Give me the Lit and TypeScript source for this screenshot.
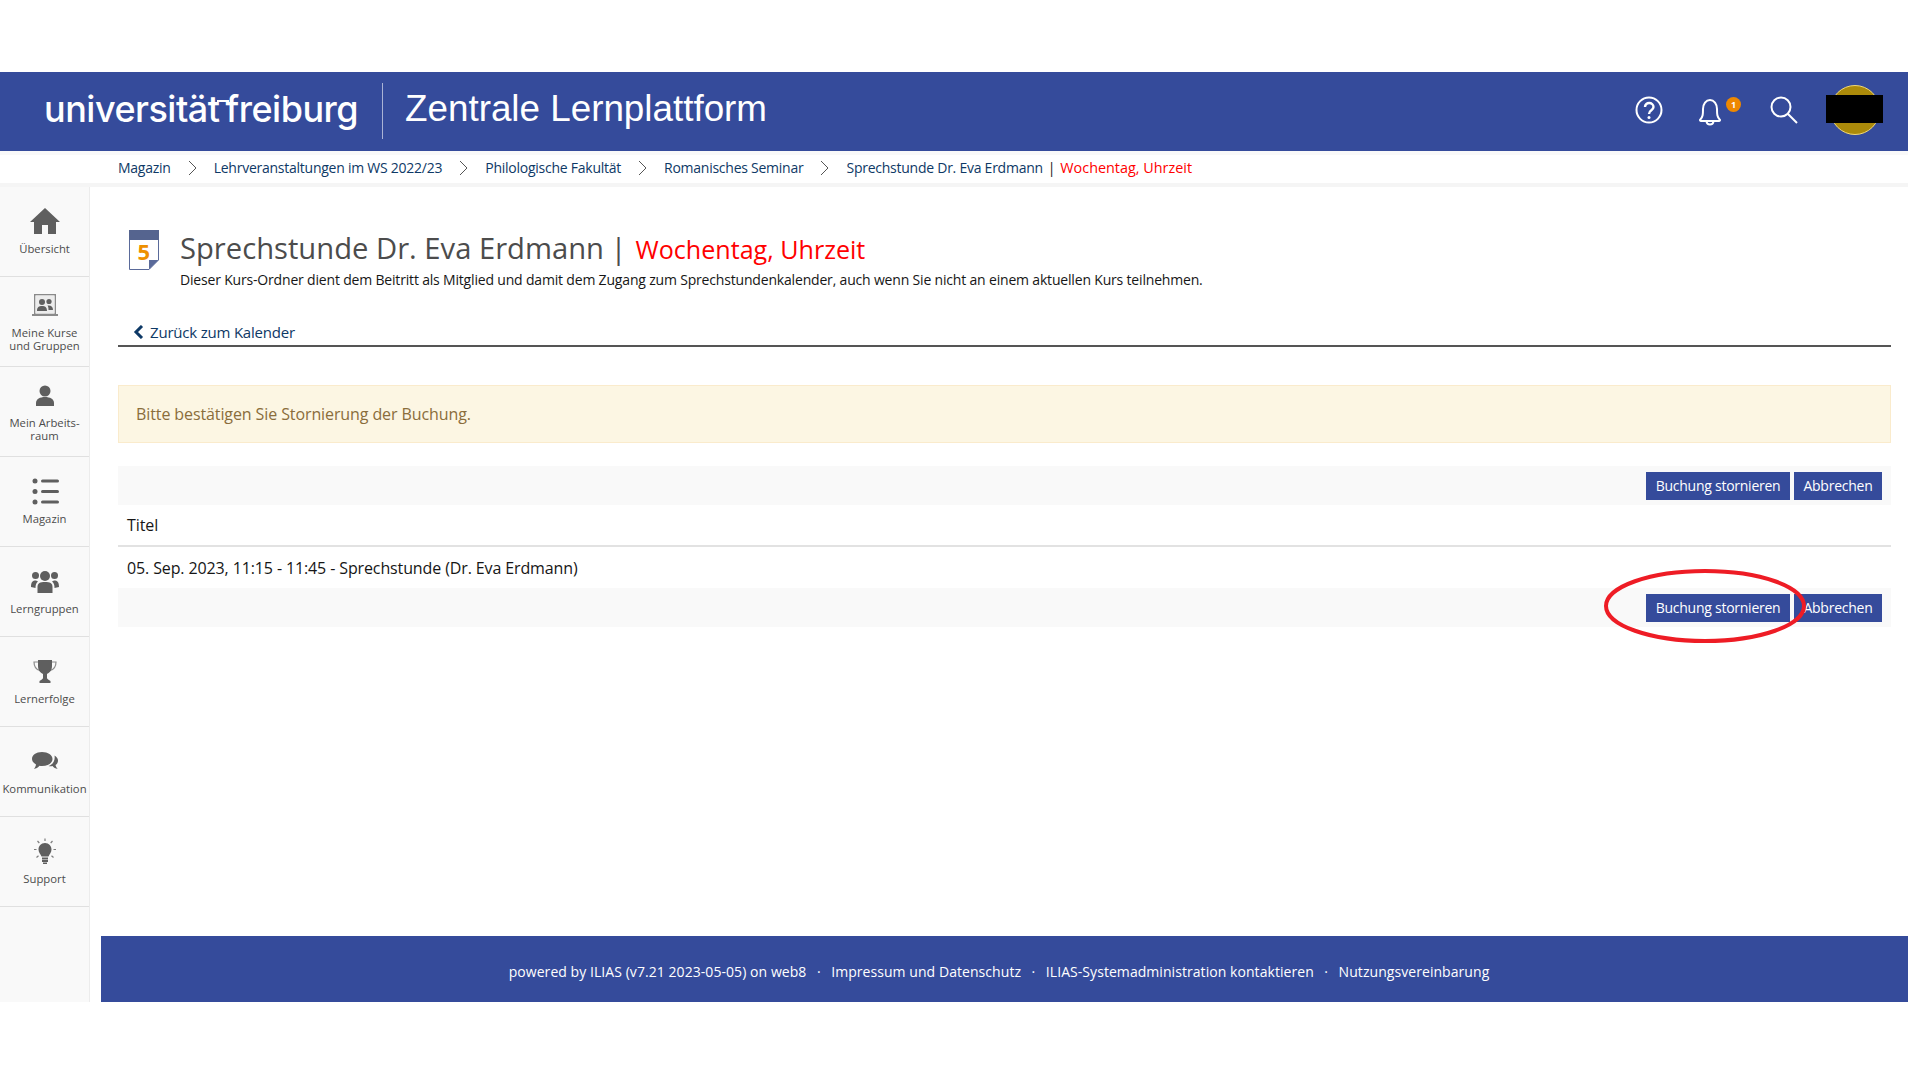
import { LitElement, html, css, svg } from "lit";
import { customElement } from "lit/decorators.js";

const nav = [
  { l: ["Übersicht"], i: svg`<path fill-rule="evenodd" d="M15 1 L30 15 H26 V27 H18 V18 H12 V27 H4 V15 H0 Z"/>` },
  { l: ["Meine Kurse", "und Gruppen"], i: svg`<path fill="#8a8a8a" fill-rule="evenodd" d="M4 3 H26 V23 H28 V25 H2 V23 H4 Z M5.500 4.500 V22.500 H24.500 V4.500 Z"/><rect x="5.500" y="4.500" width="19" height="18" fill="#ececec"/><circle cx="12" cy="11" r="3"/><circle cx="19" cy="10.500" r="2.600"/><path d="M7 20 C7 16 9 15 12 15 C15 15 17 16 17 20 Z M17.500 14.500 C21 14 23 15.500 23 19 H18.500 C18.500 17 18.300 15.500 17.500 14.500 Z"/>` },
  { l: ["Mein Arbeits-", "raum"], i: svg`<circle cx="15" cy="10" r="5.500"/><path d="M6 25 V22 C6 18 10 16 15 16 C20 16 24 18 24 22 V25 Z"/>` },
  { l: ["Magazin"], i: svg`<circle cx="5" cy="4" r="2.500"/><circle cx="5" cy="14.500" r="2.500"/><circle cx="5" cy="25" r="2.500"/><rect x="11" y="2.500" width="18" height="3" rx="1.500"/><rect x="11" y="13" width="18" height="3" rx="1.500"/><rect x="11" y="23.500" width="18" height="3" rx="1.500"/>` },
  { l: ["Lerngruppen"], i: svg`<circle cx="15" cy="9" r="5"/><circle cx="5.500" cy="8.500" r="3.500"/><circle cx="24.500" cy="8.500" r="3.500"/><path d="M7.500 26 V20 C7.500 16 10 15 15 15 C20 15 22.500 16 22.500 20 V26 Z"/><path d="M1 20 C1 15 2.500 13.500 6 13.500 L8 14.500 C6 16 5.500 18 5.500 21 Z M29 20 C29 15 27.500 13.500 24 13.500 L22 14.500 C24 16 24.500 18 24.500 21 Z"/>` },
  { l: ["Lernerfolge"], i: svg`<path d="M8 3 H22 V9 C22 14 19 16 17 17 V21 C17 22 19 23 20.500 24 V26 H9.500 V24 C11 23 13 22 13 21 V17 C11 16 8 14 8 9 Z"/><path fill="none" stroke="currentColor" stroke-width="1.200" opacity=".7" d="M8 5 H4 C4 9 6 12.500 10 13.500 M22 5 H26 C26 9 24 12.500 20 13.500"/>` },
  { l: ["Kommunikation"], i: svg`<path d="M12 5 C18 5 22.500 8 22.500 12 C22.500 16 18 19 12 19 C11 19 10.200 19 9.500 18.800 C8 20.500 6 21.800 4 22 C5 20.500 5.800 19 6 17.500 C3.500 16 2 14 2 12 C2 8 6 5 12 5 Z"/><path d="M24.500 8.500 C26.500 9.500 28 11.500 28 13.500 C28 15.500 27 17 25.500 18 C25.800 19.500 26.800 21 27.800 22 C25.500 21.500 23.500 20.500 22.500 19 C21 19.400 19.500 19.400 18.500 19.100 C22 17.800 25.500 14.500 24.500 8.500 Z"/>` },
  { l: ["Support"], i: svg`<path d="M15 6 C19 6 21.500 9 21.500 12.500 C21.500 15.500 19.500 17 18.500 19.500 H11.500 C10.500 17 8.500 15.500 8.500 12.500 C8.500 9 11 6 15 6 Z"/><rect x="12" y="20.500" width="6" height="2"/><rect x="12" y="23" width="6" height="2"/><rect x="13" y="25.500" width="4" height="1.500"/><g stroke="currentColor" stroke-width="1.200" opacity=".8"><path d="M15 1.500 V4 M7.500 4 L9.300 6 M22.500 4 L20.700 6 M4 12.500 H6.500 M23.500 12.500 H26 M6.500 20.500 L8.500 18.800 M23.500 20.500 L21.500 18.800"/></g>` },
];
const crumbs = ["Magazin", "Lehrveranstaltungen im WS 2022/23", "Philologische Fakultät", "Romanisches Seminar"];
const footLinks = ["powered by ILIAS (v7.21 2023-05-05) on web8", "Impressum und Datenschutz", "ILIAS-Systemadministration kontaktieren", "Nutzungsvereinbarung"];

@customElement("app-root")
export class AppRoot extends LitElement {
  static styles = css`
    :host { display: block; width: 1920px; height: 1080px; background: #fff; font-family: "Open Sans", sans-serif; color: #161616; overflow: hidden; }
    .page { padding: 72px 12px 0 0; box-sizing: border-box; display: flex; flex-direction: column; height: 1002px; position: relative; }
    .head { height: 79px; background: #354b9b; display: flex; align-items: center; color: #fff; flex: none; }
    .logo { margin-left: 44px; width: 338px; display: flex; font-family: Inter, sans-serif; font-weight: 500; font-size: 36px; letter-spacing: -0.5px; align-items: center; line-height: 1; margin-top: -6px; }
    .dash { width: 12px; height: 2.500px; background: #fff; margin: -15px -3px 0 -3px; flex: none; }
    .div { width: 1px; height: 56px; background: #aab3d5; margin-top: -1px; }
    .name { margin-left: 22px; font-family: "Liberation Sans", sans-serif; font-size: 36.800px; line-height: 1; margin-top: -5px; }
    .tools { margin-left: auto; display: flex; align-items: center; margin-top: -3px; }
    .tools svg { display: block; fill: none; stroke: #fff; stroke-width: 2; }
    .tb { position: relative; }
    .help { margin-right: 34.500px; }
    .bell { margin-right: 48px; margin-top: 3px; }
    .badge { position: absolute; left: 28.500px; top: -1px; width: 15px; height: 15px; border-radius: 50%; background: #ee8800; color: #fff; font: 700 9px/15px "Open Sans", sans-serif; text-align: center; }
    .search { margin-right: 32.500px; }
    .avatar { width: 50px; height: 50px; box-sizing: border-box; border-radius: 50%; background: #ab8a0a; border: 1.500px solid #f0d878; margin-right: 28px; position: relative; }
    .mask { position: absolute; left: -5px; top: 8.500px; width: 57px; height: 28px; background: #000; }
    .crumbs { flex: none; height: 36px; box-sizing: border-box; border-top: 4px solid #f9f9f9; border-bottom: 4px solid #f5f5f5; padding-bottom: 3px; display: flex; align-items: center; padding-left: 118px; font-size: 14px; letter-spacing: -0.25px; color: #0e3966; background: #fff; }
    .crumbs svg { width: 9px; height: 16px; margin: 0 17px; fill: none; stroke: #555; stroke-width: 1; flex: none; }
    .crumbs .sep { margin: 0 5px; color: #161616; }
    .crumbs .red { letter-spacing: 0; font-size: 14.400px; }
    .red { color: #ff0000; }
    .body { flex: 1; display: flex; min-height: 0; }
    .side { width: 90px; box-sizing: border-box; background: #f9f9f9; border-right: 1px solid #ececec; flex: none; }
    .item { height: 90px; box-sizing: border-box; border-bottom: 1px solid #e0e0e0; padding-bottom: 1px; display: flex; flex-direction: column; align-items: center; justify-content: center; color: #4c4c4c; font-size: 11.300px; line-height: 13px; text-align: center; }
    .item svg { width: 30px; height: 30px; fill: #5f5f5f; color: #5f5f5f; flex: none; margin-bottom: 5px; }
    .item .lines { white-space: nowrap; }
    .main { flex: 1; display: flex; flex-direction: column; margin-left: 11px; min-width: 0; }
    .content { flex: 1; padding: 0 17px; }
    .title { display: flex; padding: 43px 0 0 11px; height: 94px; box-sizing: border-box; }
    .title svg { width: 30px; height: 40px; flex: none; margin-right: 21px; }
    .tt { display: flex; flex-direction: column; margin-top: -1px; }
    h1 { margin: 0; font-weight: 400; font-size: 29.200px; line-height: 38px; color: #4c4c4c; white-space: nowrap; display: flex; align-items: baseline; }
    h1 .red { font-size: 25.100px; }
    h1 .bar { margin: 0 9px 0 6.500px; }
    .desc { font-size: 14px; line-height: 18px; margin-top: 3px; letter-spacing: -0.18px; white-space: nowrap; }
    .tabs { margin-top: 32px; border-bottom: 2px solid #555; display: flex; align-items: center; padding: 5px 0 0 15px; box-sizing: content-box; height: 27px; color: #0e3966; font-size: 15px; letter-spacing: -0.2px; }
    .tabs svg { width: 11px; height: 14px; margin-right: 6px; fill: none; stroke: #0e3966; stroke-width: 3; }
    .alert { margin-top: 38px; height: 58px; box-sizing: border-box; background: #fcf6e3; border: 1px solid #faebcc; display: flex; align-items: center; padding-left: 17px; color: #8a6d3b; font-size: 16px; letter-spacing: -0.1px; }
    .tool { display: flex; justify-content: flex-end; align-items: center; gap: 4px; background: #f9f9f9; height: 39px; padding-right: 9px; }
    .t1 { margin-top: 23px; }
    .btn { height: 28px; background: #354b9b; color: #fff; font-size: 14px; display: flex; align-items: center; padding: 0 9.500px; letter-spacing: -0.25px; box-sizing: border-box; }
    .th { height: 40px; border-bottom: 2px solid #e2e2e2; padding-left: 9px; display: flex; align-items: center; font-size: 16px; letter-spacing: -0.1px; }
    .td { height: 41px; padding-left: 9px; display: flex; align-items: center; font-size: 16px; letter-spacing: -0.12px; }
    .foot { flex: none; height: 66px; box-sizing: border-box; padding: 4px 11px 0 0; background: #354b9b; color: #fff; font-size: 14px; display: flex; align-items: center; justify-content: center; white-space: nowrap; letter-spacing: 0.06px; }
    .dot { margin: 0 10.500px; }
    .ring { position: absolute; left: 1602px; top: 567px; width: 206px; height: 78px; fill: none; stroke: #ee1c25; stroke-width: 4; pointer-events: none; }
  `;

  render() {
    return html`<div class="page">
      <header class="head">
        <div class="logo"><span>universität</span><span class="dash"></span><span>freiburg</span></div>
        <div class="div"></div>
        <div class="name">Zentrale Lernplattform</div>
        <div class="tools">
          <div class="tb help"><svg width="28" height="28" viewBox="0 0 28 28"><circle cx="14" cy="14" r="12.500"/><path d="M10 11 C10 5.500 18.500 6 18.500 11 C18.500 14.500 14 14 14 18" stroke-width="2.400"/><circle cx="14" cy="21.500" r="1.500" fill="#fff" stroke="none"/></svg></div>
          <div class="tb bell"><svg width="24" height="28" viewBox="0 0 24 28"><path d="M2 22 C5 19 5 16 5 11 C5 6 8 2 12 2 C16 2 19 6 19 11 C19 16 19 19 22 22 C22 23 21 23 20 23 H4 C3 23 2 23 2 22 Z M8.500 23.500 C9 27.500 15 27.500 15.500 23.500"/></svg><span class="badge">1</span></div>
          <div class="tb search"><svg width="28" height="28" viewBox="0 0 28 28"><circle cx="11" cy="11" r="9.500"/><path d="M18 18 L27 27"/></svg></div>
          <div class="avatar"><div class="mask"></div></div>
        </div>
      </header>
      <nav class="crumbs">
        ${crumbs.map((c) => html`<span>${c}</span><svg viewBox="0 0 9 16"><path d="M1 1 L8 8 L1 15"/></svg>`)}
        <span>Sprechstunde Dr. Eva Erdmann</span><span class="sep">|</span><span class="red">Wochentag, Uhrzeit</span>
      </nav>
      <div class="body">
        <aside class="side">
          ${nav.map((n) => html`<div class="item"><svg viewBox="0 0 30 30">${n.i}</svg><div class="lines">${n.l.map((t) => html`<div>${t}</div>`)}</div></div>`)}
        </aside>
        <div class="main">
          <div class="content">
            <div class="title">
              <svg viewBox="0 0 30 40"><path d="M.5.5 H29.500 V30 L20 39.500 H.5 Z" fill="#fff" stroke="#5a6a9a"/><rect x="0" y="0" width="30" height="10" fill="#55648f"/><path d="M20 39.500 V30 H29.500 Z" fill="#5a6a9a"/><text x="8.500" y="30" font-family="Open Sans" font-size="22" font-weight="700" fill="#ee9000">5</text></svg>
              <div class="tt">
                <h1>Sprechstunde Dr. Eva Erdmann<span class="bar">|</span><span class="red">Wochentag, Uhrzeit</span></h1>
                <div class="desc">Dieser Kurs-Ordner dient dem Beitritt als Mitglied und damit dem Zugang zum Sprechstundenkalender, auch wenn Sie nicht an einem aktuellen Kurs teilnehmen.</div>
              </div>
            </div>
            <div class="tabs"><svg viewBox="0 0 11 14"><path d="M9 1 L3 7 L9 13"/></svg><span>Zurück zum Kalender</span></div>
            <div class="alert">Bitte bestätigen Sie Stornierung der Buchung.</div>
            <div class="tool t1"><div class="btn">Buchung stornieren</div><div class="btn">Abbrechen</div></div>
            <div class="th">Titel</div>
            <div class="td">05. Sep. 2023, 11:15 - 11:45 - Sprechstunde (Dr. Eva Erdmann)</div>
            <div class="tool"><div class="btn">Buchung stornieren</div><div class="btn">Abbrechen</div></div>
          </div>
          <footer class="foot">${footLinks.map((f, i) => html`${i ? html`<span class="dot">·</span>` : ""}<span>${f}</span>`)}</footer>
        </div>
      </div>
      <svg class="ring" viewBox="0 0 206 78"><ellipse cx="103" cy="39" rx="99" ry="35"/></svg>
    </div>`;
  }
}
